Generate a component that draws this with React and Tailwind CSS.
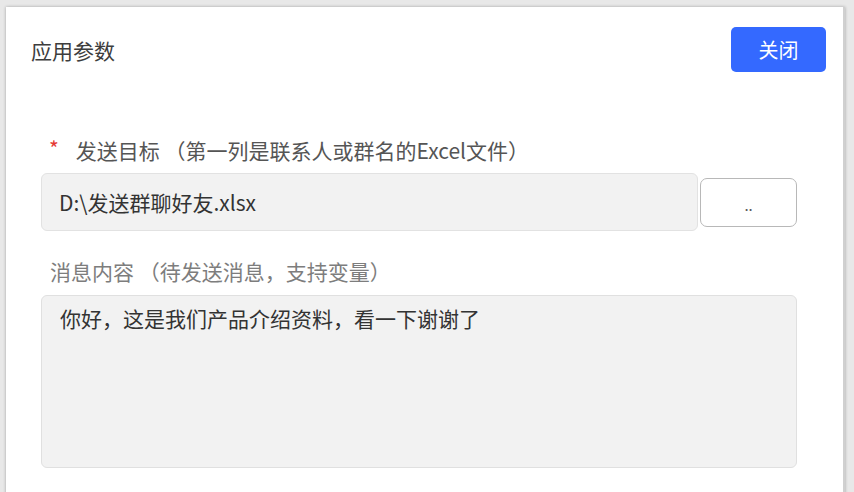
import React, { useState } from 'react';

const font = { fontFamily: '"Noto Sans CJK SC", "Noto Sans", sans-serif' };

const App = () => {
  const [target, setTarget] = useState('D:\\发送群聊好友.xlsx');
  const [message, setMessage] = useState('你好，这是我们产品介绍资料，看一下谢谢了');

  return (
    <div className="w-[854px] h-[492px] overflow-hidden bg-[#e8e8e8] pt-[7px] pl-[6px] pr-[9px]" style={font}>
      <div className="h-[520px] bg-white shadow-[0_0_3px_rgba(0,0,0,0.3)] border-r-[2px] border-[#d0d0d0] pt-[20px] pr-[17px]">
        {/* Header */}
        <div className="flex items-center justify-between pl-[25px]">
          <h1 className="text-[21px] leading-[28px] text-[#3d3d3d] font-normal">应用参数</h1>
          <button className="w-[95px] h-[45px] rounded-[5px] bg-[#3469ff] text-white text-[20px] leading-none">
            关闭
          </button>
        </div>

        {/* Form */}
        <div className="pl-[35px] w-[791px] mt-[64px]">
          <label className="flex items-start pl-[8px] text-[21px] leading-[28px] text-[#555555]">
            <span className="text-[#e53935] text-[21px] leading-[24px] mr-[17px]">*</span>
            <span>发送目标 （第一列是联系人或群名的Excel文件）</span>
          </label>
          <div className="flex items-center gap-[2px] mt-[9px]">
            <input
              type="text"
              value={target}
              onChange={(e) => setTarget(e.target.value)}
              className="w-[658px] h-[58px] rounded-[6px] border border-[#e2e2e2] bg-[#f2f2f2] pl-[17px] text-[21px] text-[#333333] outline-none"
            />
            <button className="w-[97px] h-[49px] rounded-[7px] border border-[#b8b8b8] bg-white text-[15px] text-[#555555] pt-[6px]">
              ..
            </button>
          </div>

          <label className="block pl-[9px] mt-[26px] text-[21px] leading-[28px] text-[#7d7d7d]">
            消息内容 （待发送消息，支持变量）
          </label>
          <textarea
            value={message}
            onChange={(e) => setMessage(e.target.value)}
            className="block w-[756px] h-[173px] mt-[10px] resize-none rounded-[6px] border border-[#e0e0e0] bg-[#f2f2f2] px-[18px] pt-[8px] text-[21px] leading-[28px] text-[#333333] outline-none"
          />
        </div>
      </div>
    </div>
  );
};

export default App;
